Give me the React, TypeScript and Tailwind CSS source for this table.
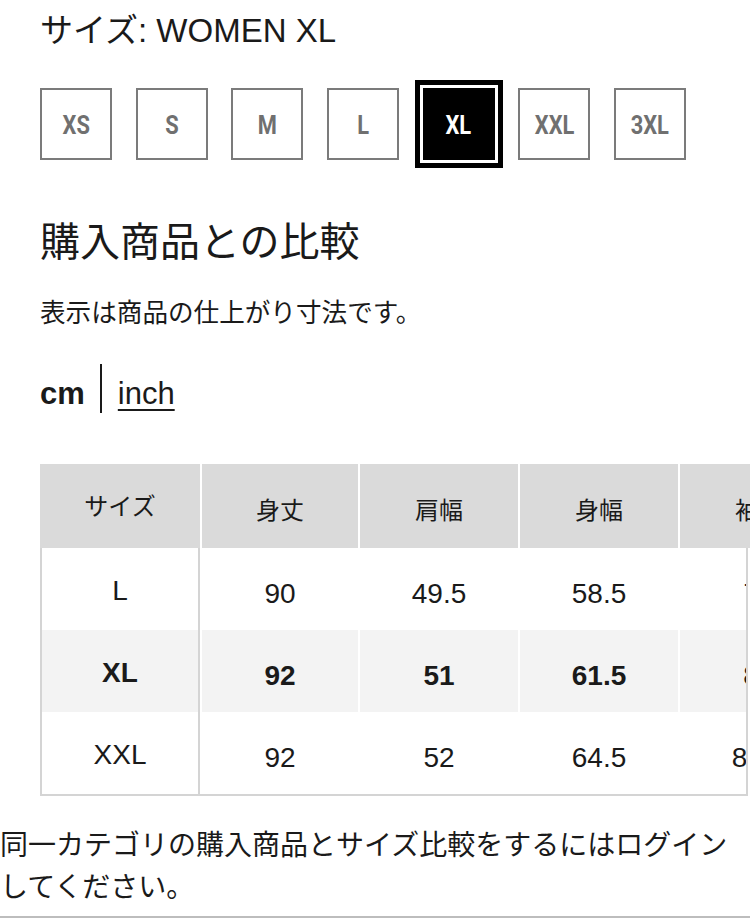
import * as React from "react";

const sizes = ["XS", "S", "M", "L", "XL", "XXL", "3XL"];
const columns = ["身丈", "肩幅", "身幅", "袖丈"];
const rows = [
  { size: "L", values: ["90", "49.5", "58.5", "78"], current: false },
  { size: "XL", values: ["92", "51", "61.5", "80"], current: true },
  { size: "XXL", values: ["92", "52", "64.5", "81.5"], current: false },
];

export default function App() {
  return (
    <div className="w-[750px] h-[920px] overflow-hidden bg-white text-[#1a1a1a] font-['Liberation_Sans','Noto_Sans_CJK_JP',sans-serif]">
      <div className="pl-[40px]">
        {/* Selected size */}
        <div className="pt-[11px] text-[33px] leading-[40px]">サイズ: WOMEN XL</div>

        {/* Size chips */}
        <div className="mt-[37px] flex gap-[23.7px]">
          {sizes.map((s) => {
            const active = s === "XL";
            return (
              <div
                key={s}
                className={
                  active
                    ? "w-[72px] h-[72px] shrink-0 flex items-center justify-center border-2 border-black bg-black text-white outline-[5px] outline-solid outline-black outline-offset-[3px]"
                    : "w-[72px] h-[72px] shrink-0 flex items-center justify-center border-2 border-[#7b7b7b] bg-white text-[#707070]"
                }
              >
                <span className="font-['Roboto',sans-serif] font-bold text-[26px] leading-none scale-x-[0.84] pt-[2px]">{s}</span>
              </div>
            );
          })}
        </div>

        {/* Comparison heading */}
        <h2 className="mt-[58px] text-[40px] leading-[48px] font-normal">購入商品との比較</h2>
        <p className="mt-[29px] text-[25.6px] leading-[36px]">表示は商品の仕上がり寸法です。</p>

        {/* Unit toggle */}
        <div className="mt-[33px] flex items-center">
          <span className="font-bold text-[31px] leading-[30px] pt-[10px]">cm</span>
          <div className="ml-[15px] w-[2px] h-[49px] bg-[#1a1a1a]" />
          <span className="ml-[16px] text-[31px] leading-[30px] pt-[10px] underline underline-offset-[5px] decoration-[1.5px]">inch</span>
        </div>

        {/* Size table */}
        <div className="mt-[51px] w-[710px] overflow-hidden">
          <div className="flex">
            <div className="w-[160px] h-[84px] shrink-0 mr-[2px] bg-[#dadada] flex items-center justify-center text-[24px] pt-[2px]">
              サイズ
            </div>
            {columns.map((c, i) => (
              <div
                key={c}
                className={
                  (i === 0 ? "w-[156px] " : "w-[158px] ") +
                  "h-[84px] shrink-0 mr-[2px] bg-[#dadada] flex items-center justify-center text-[24px] pt-[9px]"
                }
              >
                {c}
              </div>
            ))}
          </div>
          <div className="w-[708px] overflow-hidden border-l-2 border-r-2 border-b-2 border-[#d4d4d4]">
            {rows.map((r) => (
              <div key={r.size} className={r.current ? "flex font-bold" : "flex"}>
                <div
                  className={
                    (r.current ? "bg-[#f3f3f3] " : "") +
                    "w-[158px] h-[82px] shrink-0 mr-[2px] border-r-2 border-[#d4d4d4] flex items-center justify-center text-[28px] pt-[3px]"
                  }
                >
                  {r.size}
                </div>
                {r.values.map((v, i) => (
                  <div
                    key={i}
                    className={
                      (r.current ? "bg-[#f3f3f3] " : "") +
                      (i === 0 ? "w-[156px] " : "w-[158px] ") +
                      "h-[82px] shrink-0 mr-[2px] flex items-center justify-center text-[28px] pt-[9px]"
                    }
                  >
                    {v}
                  </div>
                ))}
              </div>
            ))}
          </div>
        </div>
      </div>

      {/* Login note */}
      <p className="mt-[26px] pb-[10px] border-b-2 border-[#bdbdbd] text-[28px] leading-[42px] font-['Noto_Sans_CJK_JP',sans-serif]">
        同一カテゴリの購入商品とサイズ比較をするにはログインしてください。
      </p>
    </div>
  );
}
